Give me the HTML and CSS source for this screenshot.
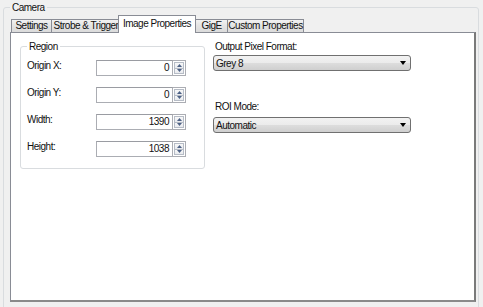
FILE: index.html
```html
<!DOCTYPE html>
<html lang="en">
<head>
  <meta charset="UTF-8">
  <title>Camera</title>
  <link rel="stylesheet" href="styles.css">
</head>
<body>
  <div class="camera">
    <span class="camera-title">Camera</span>

    <div class="tabs">
      <div class="tab" style="width: 41px">Settings</div>
      <div class="tab" style="width: 70px">Strobe &amp; Trigger</div>
      <div class="tab active" style="width: 78px">Image Properties</div>
      <div class="tab" style="width: 33px">GigE</div>
      <div class="tab" style="width: 77px">Custom Properties</div>
    </div>

    <div class="panel">
      <div class="region">
        <span class="region-title">Region</span>

        <div class="row">
          <label>Origin X:</label>
          <div class="spin">
            <div class="spin-value">0</div>
            <div class="spin-buttons">
              <div class="spin-btn"><svg width="5" height="3"><path d="M0 3h5L2.5 0z" fill="#4d6185"/></svg></div>
              <div class="spin-btn"><svg width="5" height="3"><path d="M0 0h5L2.5 3z" fill="#4d6185"/></svg></div>
            </div>
          </div>
        </div>

        <div class="row">
          <label>Origin Y:</label>
          <div class="spin">
            <div class="spin-value">0</div>
            <div class="spin-buttons">
              <div class="spin-btn"><svg width="5" height="3"><path d="M0 3h5L2.5 0z" fill="#4d6185"/></svg></div>
              <div class="spin-btn"><svg width="5" height="3"><path d="M0 0h5L2.5 3z" fill="#4d6185"/></svg></div>
            </div>
          </div>
        </div>

        <div class="row">
          <label>Width:</label>
          <div class="spin">
            <div class="spin-value">1390</div>
            <div class="spin-buttons">
              <div class="spin-btn"><svg width="5" height="3"><path d="M0 3h5L2.5 0z" fill="#4d6185"/></svg></div>
              <div class="spin-btn"><svg width="5" height="3"><path d="M0 0h5L2.5 3z" fill="#4d6185"/></svg></div>
            </div>
          </div>
        </div>

        <div class="row">
          <label>Height:</label>
          <div class="spin">
            <div class="spin-value">1038</div>
            <div class="spin-buttons">
              <div class="spin-btn"><svg width="5" height="3"><path d="M0 3h5L2.5 0z" fill="#4d6185"/></svg></div>
              <div class="spin-btn"><svg width="5" height="3"><path d="M0 0h5L2.5 3z" fill="#4d6185"/></svg></div>
            </div>
          </div>
        </div>
      </div>

      <div class="options">
        <label>Output Pixel Format:</label>
        <div class="combo">
          <span>Grey 8</span>
          <svg width="6" height="4"><path d="M0 0h6L3 4z" fill="#000"/></svg>
        </div>

        <label class="roi-label">ROI Mode:</label>
        <div class="combo">
          <span>Automatic</span>
          <svg width="6" height="4"><path d="M0 0h6L3 4z" fill="#000"/></svg>
        </div>
      </div>
    </div>
  </div>
</body>
</html>
```

FILE: styles.css
```css
body {
  margin: 0;
  background-color: #f0f0f0;
  font-family: "Liberation Sans", Arial, sans-serif;
  font-size: 10px;
  letter-spacing: -0.5px;
  color: #111;
}

/* outer group box */
.camera {
  position: relative;
  margin: 7px 4px 0 3px;
  height: 296px;
  padding: 8px 2px 0 6px;
  border: 1px solid #d9dcdf;
  border-radius: 3px;
}

.camera-title {
  position: absolute;
  top: -7px;
  left: 6px;
  padding: 0 2px;
  line-height: 13px;
  background-color: #f0f0f0;
}

/* tab strip */
.tabs {
  display: flex;
  align-items: flex-end;
  height: 16px;
  padding-left: 1px;
  position: relative;
  z-index: 1;
}

.tab {
  box-sizing: border-box;
  height: 13px;
  line-height: 12px;
  text-align: center;
  white-space: nowrap;
  border: 1px solid #898c95;
  border-bottom: none;
  margin-right: -1px;
  background: linear-gradient(#f2f2f2, #e3e3e3 50%, #dbdbdb);
}

.tab.active {
  height: 18px;
  margin: 0 -1px -1px -2px;
  background: #fff;
  line-height: 15px;
}

/* tab page */
.panel {
  display: flex;
  align-items: flex-start;
  box-sizing: border-box;
  height: 270px;
  border: 1px solid #898c95;
  border-right: 2px solid #7a7a7a;
  border-bottom: 2px solid #8a8a8a;
  background-color: #fff;
  padding: 13px 0 0 9px;
}

.region {
  position: relative;
  flex: none;
  box-sizing: border-box;
  width: 185px;
  height: 123px;
  border: 1px solid #d9dcdf;
  border-radius: 3px;
  padding: 13px 0 0 6px;
}

.region-title {
  position: absolute;
  top: -7px;
  left: 6px;
  padding: 0 2px;
  line-height: 13px;
  background-color: #fff;
}

.row {
  display: flex;
  align-items: flex-start;
  height: 27px;
}

.row label {
  width: 69px;
  line-height: 12px;
}

.spin {
  display: flex;
  height: 16px;
}

.spin-value {
  box-sizing: border-box;
  width: 77px;
  height: 16px;
  border: 1px solid #abadb3;
  border-top-color: #9a9ca2;
  text-align: right;
  padding-right: 3px;
  line-height: 14px;
}

.spin-buttons {
  display: flex;
  flex-direction: column;
  width: 13px;
  height: 16px;
  border: 1px solid #abadb3;
  border-left: none;
  box-sizing: border-box;
  padding: 1px;
}

.spin-btn {
  flex: 1;
  display: flex;
  align-items: center;
  justify-content: center;
  border: 1px solid #b6bcc6;
  background: linear-gradient(#f8f8f8, #e8eaee);
}

.spin-btn + .spin-btn {
  border-top: none;
}

.options {
  display: flex;
  flex-direction: column;
  margin: -13px 0 0 8px;
  width: 198px;
}

.options label {
  line-height: 12px;
  margin: 8px 0 2px 2px;
}

.options .roi-label {
  margin: 30px 0 4px 2px;
}

.combo {
  box-sizing: border-box;
  display: flex;
  align-items: center;
  justify-content: space-between;
  height: 16px;
  padding: 0 4px 0 2px;
  border: 1px solid #707070;
  border-radius: 3px;
  background: linear-gradient(#f2f2f2, #ebebeb 50%, #dddddd 51%, #cfcfcf);
}
```
